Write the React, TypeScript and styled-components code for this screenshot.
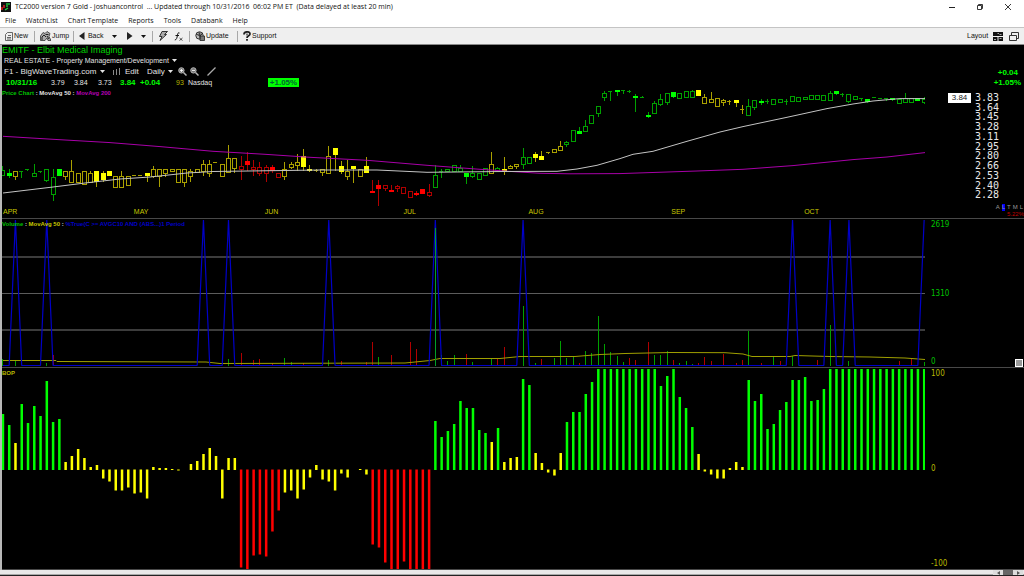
import React from 'react';
import styled, { createGlobalStyle } from 'styled-components';

const GREEN = '#00ff00';
const YELLOW = '#ffff00';
const RED = '#ff0000';

const GlobalStyle = createGlobalStyle`
  *, *::before, *::after { box-sizing: border-box; }
  body { margin: 0; background: #000; font-family: "Liberation Sans", Arial, sans-serif; }
  button, select {
    margin: 0; padding: 0; border: 0; background: none; color: inherit;
    font: inherit; line-height: inherit; appearance: none; cursor: pointer;
  }
  svg { display: block; flex: none; }
`;

/* ---------- data ---------- */

const FIRST_X = 2.9;
const STEP = 6.267;
const barX = (i: number) => FIRST_X + i * STEP;

type Tone = 'g' | 'y' | 'r';

// first bar index of each run of one colour, shared by the candles and the BOP bars
const toneRuns: [number, Tone][] = [
  [0, 'g'], [2, 'y'], [3, 'g'], [10, 'y'], [38, 'r'], [45, 'y'], [59, 'r'], [69, 'g'], [78, 'y'],
  [79, 'g'], [80, 'y'], [83, 'g'], [85, 'y'], [90, 'g'], [111, 'y'], [119, 'g'],
];

const toneAt = (i: number): Tone => {
  let tone: Tone = 'g';
  toneRuns.forEach(([from, t]) => {
    if (i >= from) tone = t;
  });
  return tone;
};

// high, body top, body bottom, low; an asterisk marks a solid body
const candles = `166,170,175,176 169,173,176,178* 171,171,176,180 171,171,172,178 169,169,170,171
164,173,176,176 171,171,172,173 169,169,180,182 169,177,194,201 169,169,176,176* 171,171,176,180
160,171,182,182 173,173,182,182 171,171,184,184 171,173,182,182 171,171,182,187* 171,173,180,182*
171,171,176,176* 176,176,187,187 171,176,187,187 176,176,185,185 175,175,176,176 175,175,176,176
173,173,176,182* 166,169,176,178 169,169,176,187 169,169,173,177 169,169,171,172 169,169,182,182
169,169,182,187 169,171,176,182 169,169,172,172 160,164,171,176 160,164,173,177 162,162,163,163
164,164,176,177 145,158,172,172 158,158,168,173 156,166,169,180 152,161,165,171* 160,167,169,176
162,167,173,176 165,167,173,182 165,167,171,173* 173,173,177,177 162,169,176,180 162,164,167,169
154,162,165,171 149,156,167,171* 165,169,171,172* 169,170,171,172 169,169,172,176 146,156,173,173
148,148,155,171* 161,166,172,174* 160,171,176,180 166,166,169,183* 169,169,176,176 157,166,173,173*
180,191,193,193* 180,185,189,207* 185,185,188,191 185,190,192,192* 185,186,188,192 187,187,193,193
191,191,197,197 191,193,195,196* 189,189,194,194* 184,192,195,197 165,175,187,187 169,171,172,178
169,169,171,171 165,165,171,171 165,168,171,172 173,173,177,184* 166,173,176,178 173,173,179,179
168,168,175,175 152,164,173,173 167,168,171,172 157,169,171,175* 165,166,168,168 164,164,166,169
148,157,164,169 157,157,163,163 152,154,158,162* 151,156,160,160* 152,152,153,154 149,149,152,152
141,146,150,150 141,142,144,147 130,130,141,141 127,131,134,134* 120,126,131,131 115,115,123,123
106,106,113,117 91,93,97,101 91,91,92,101 90,90,92,96* 90,90,91,94 90,91,92,93 94,96,98,112*
96,97,98,98 112,115,117,118* 101,103,113,114 94,99,104,106 93,93,102,105 92,92,97,98* 93,93,98,98
91,91,97,97 90,91,97,97 90,90,96,96* 94,97,103,103 92,99,102,103 98,98,106,106 99,100,102,106
100,101,102,105 100,100,103,107* 105,109,110,114 99,106,115,115 100,100,107,110 99,101,103,105*
99,101,102,104 99,99,104,104 99,99,102,103 99,101,102,105 96,96,101,101 97,97,101,101 97,97,99,99
95,95,99,99 95,95,99,99 95,95,100,100 91,93,100,100 91,91,94,95* 93,94,95,97 94,94,101,103
96,96,99,100 98,98,99,101 99,99,102,103* 97,97,98,98 98,98,99,99 98,98,99,101 98,98,100,101*
99,99,103,103 93,98,102,102 98,98,102,102 98,98,101,101* 97,99,102,104`
  .split(/\s+/)
  .map((item) => ({
    solid: item.endsWith('*'),
    v: item.replace('*', '').split(',').map(Number),
  }));

const bop = [
  56, 45, 27, 66, 47, 64, 54, 89, 48, 51, 8, 14, 21, 12, 3, 5, -9, -12, -21, -21, -18, -24, -23, -29,
  3, 2, 2, 1, -1, 0, 6, 9, 16, 22, 14, -29, 12, 12, -98, -100, -86, -85, -87, -62, -41, -23, -21, -29,
  -20, -8, 5, -10, -12, -21, -4, -8, 0, 1, -5, -75, -78, -93, -100, -100, -92, -100, -100, -100, -100,
  49, 33, 39, 46, 69, 62, 62, 40, 37, 28, 42, 8, 12, 13, 91, 85, 17, 7, -3, -6, 17, 48, 58, 58, 76, 88,
  101, 101, 101, 101, 101, 101, 101, 101, 101, 101, 84, 94, 101, 73, 62, 43, 16, -2, -5, -9, -9, 2, 8,
  3, 90, 69, 76, 41, 46, 60, 68, 90, 90, 93, 69, 70, 81, 101, 101, 101, 101, 101, 101, 101, 101, 101,
  101, 101, 101, 101, 101, 101, 101,
];

// bar index, top, tone
const volumes: [number, number, Tone][] = [
  [0, 359, 'g'], [2, 361, 'g'], [7, 363, 'g'], [8, 355, 'r'], [36, 359, 'g'], [38, 353, 'r'], [40, 360, 'r'],
  [41, 359, 'r'], [43, 363, 'r'], [45, 358, 'g'], [46, 362, 'g'], [48, 363, 'r'], [52, 360, 'g'],
  [54, 361, 'r'], [58, 362, 'r'], [59, 342, 'r'], [60, 357, 'g'], [62, 355, 'r'], [65, 342, 'r'],
  [66, 349, 'r'], [69, 228, 'g'], [70, 355, 'g'], [71, 361, 'g'], [72, 355, 'g'], [74, 354, 'r'],
  [75, 362, 'g'], [78, 359, 'g'], [79, 359, 'r'], [80, 347, 'r'], [83, 306, 'g'], [85, 363, 'g'],
  [86, 359, 'r'], [88, 358, 'g'], [89, 341, 'g'], [90, 358, 'g'], [91, 356, 'g'], [92, 363, 'r'],
  [93, 351, 'g'], [94, 353, 'g'], [95, 316, 'g'], [96, 344, 'g'], [97, 352, 'g'], [98, 356, 'g'],
  [99, 362, 'g'], [100, 358, 'r'], [101, 360, 'r'], [103, 342, 'r'], [104, 355, 'g'], [105, 355, 'g'],
  [106, 351, 'g'], [107, 360, 'r'], [108, 363, 'g'], [109, 361, 'g'], [110, 364, 'g'], [111, 363, 'r'],
  [112, 357, 'r'], [113, 361, 'r'], [115, 354, 'r'], [117, 363, 'r'], [118, 360, 'r'], [119, 331, 'g'],
  [121, 363, 'r'], [123, 356, 'g'], [124, 361, 'r'], [126, 356, 'g'], [130, 360, 'r'], [132, 325, 'g'],
  [135, 361, 'g'], [143, 361, 'r'], [145, 359, 'r'], [147, 362, 'g'],
];

const signals = [2, 7, 32, 36, 52, 69, 83, 126, 132, 135, 147];

const ma50 =
  '3,193 53,187 85,183 120,179 150,177 187,173 213,171.5 320,170 377,170 427,172.3 503,171.5 557,171.3 577,169 597,165.3 620,158.6 633,154.3 653,151.3 687,141.3 720,132 743,126.6 787,117.3 827,108.6 853,104 873,101 900,98.6 925,98.6';
const ma200 =
  '3,136.3 53,139.3 110,142.6 160,146.6 213,151.3 265,154.3 310,157.3 367,160.3 427,165.3 480,169.3 513,171.6 540,173.3 570,173.8 620,173.6 697,171 743,169.3 793,165.6 853,159.6 887,157 925,152.6';
const volumeMa =
  '3,360.5 56,360.5 57,361.5 206,362 220,363.5 405,363 420,361.5 430,360.5 440,358.5 500,358.5 520,356.5 575,356.5 600,354.5 625,353.5 670,352.5 725,352.7 743,354 752,356.5 790,356.5 795,355.5 830,356.5 870,357 905,358 925,359.5';

const priceTicks = ['3.83', '3.64', '3.45', '3.28', '3.11', '2.95', '2.80', '2.66', '2.53', '2.40', '2.28'];
const months = ['APR', 'MAY', 'JUN', 'JUL', 'AUG', 'SEP', 'OCT'];

/* ---------- window frame ---------- */

const AppWindow = styled.div`
  display: flex;
  flex-direction: column;
  min-height: 100vh;
  background: #fff;
  color: #111;
`;

const TitleBar = styled.header`
  display: flex;
  align-items: center;
  height: 14px;
  padding: 0 12px 0 1px;
  gap: 4px;
  font: 7px/14px "Open Sans", "Noto Sans", sans-serif;
`;

const Title = styled.h1`
  flex: 1;
  margin: 0;
  font: inherit;
  white-space: pre;
`;

const WindowButtons = styled.div`
  display: flex;
  gap: 20px;
`;

const MenuBar = styled.nav`
  display: flex;
  align-items: center;
  height: 13px;
  padding: 0 5px;
  gap: 10px;
  font: 7px/13px "Open Sans", "Noto Sans", sans-serif;
`;

const ToolBar = styled.div`
  display: flex;
  align-items: center;
  height: 18px;
  padding: 0 5px;
  background: #efefef;
  border-top: 1px solid #c4c4c4;
  border-bottom: 1px solid #8a8a8a;
  font-size: 7px;
  line-height: 14px;
`;

const ToolButton = styled.button<{ $width?: number }>`
  display: flex;
  align-items: center;
  gap: 1px;
  width: ${(p) => (p.$width ? `${p.$width}px` : 'auto')};
  white-space: nowrap;
`;

const Divider = styled.span`
  width: 1px;
  height: 11px;
  margin: 0 5px;
  background: #a8a8a8;
`;

const LayoutTools = styled.div`
  display: flex;
  align-items: center;
  gap: 6px;
  margin-left: auto;
`;

/* ---------- chart panes ---------- */

const Charts = styled.main`
  flex: 1;
  display: grid;
  grid-template-rows: minmax(174px, 174fr) minmax(149px, 149fr) minmax(202px, 202fr);
  border-left: 2px solid #b8b8b8;
  background: #000;
`;

const Pane = styled.section`
  display: grid;
  grid-template-columns: minmax(0, 1fr) 99px;
  min-height: 0;
  border-bottom: 1px solid #484848;
`;

const PlotArea = styled.div`
  display: grid;
  grid-template: minmax(0, 1fr) / minmax(0, 1fr);
  min-height: 0;
`;

const PlotSvg = styled.svg`
  grid-area: 1 / 1;
  width: 100%;
  height: 0;
  min-height: 100%;
`;

const PriceColumn = styled.div`
  display: grid;
  grid-template-rows: minmax(0, 1fr) 12px;
  min-height: 0;
`;

const MonthRow = styled.div`
  display: grid;
  grid-template-columns: 131fr 131fr 139fr 125fr 143fr 133fr 121fr;
  padding-left: 1px;
  color: #c8c800;
  font-size: 7px;
  line-height: 11px;
`;

const Overlay = styled.div`
  grid-area: 1 / 1;
  z-index: 1;
  justify-self: start;
  align-self: start;
  color: #e4e4e4;
  white-space: nowrap;
`;

const Symbol = styled.h2`
  margin: 0;
  color: #00d000;
  font-size: 9px;
  font-weight: 400;
  line-height: 10px;
`;

const Line = styled.div<{ $size: number }>`
  display: flex;
  align-items: center;
  gap: 3px;
  height: 11px;
  padding-left: 2px;
  font-size: ${(p) => p.$size}px;
  line-height: 11px;
`;

const ChartTools = styled.div`
  display: flex;
  gap: 3px;
  padding-left: 2px;
`;

const Quotes = styled.div`
  display: grid;
  grid-template-columns: 45px 23px 24px 22px 20px 36px 12px 80px auto;
  height: 11px;
  padding-left: 4px;
  font-size: 7px;
  line-height: 11px;
`;

const Up = styled.strong`
  color: ${GREEN};
  font-size: 8px;
`;

const Rank = styled.span`
  color: #b8b800;
`;

const Badge = styled.strong`
  align-self: center;
  width: 31px;
  height: 9px;
  background: ${GREEN};
  color: #063;
  font-size: 8px;
  line-height: 9px;
  text-align: center;
`;

const Legend = styled.div`
  height: 10px;
  font: bold 6px/10px "Liberation Sans", Arial, sans-serif;
`;

const Tint = styled.span<{ $color: string }>`
  color: ${(p) => p.$color};
`;

const PriceAxis = styled.div`
  display: grid;
  grid-template-columns: 23px 27px 1fr;
  grid-template-rows: 23px 10px 10px 5px minmax(0, 1fr);
  min-height: 0;
`;

const Change = styled.strong<{ $row: number; $inset: number }>`
  grid-column: 1 / -1;
  grid-row: ${(p) => p.$row};
  padding-right: ${(p) => p.$inset}px;
  color: ${GREEN};
  font-size: 8px;
  line-height: 10px;
  text-align: right;
`;

const LastPrice = styled.span`
  grid-column: 2;
  grid-row: 5;
  width: 23px;
  height: 10px;
  background: #fff;
  color: #222;
  font-size: 8px;
  line-height: 10px;
  text-align: center;
`;

const PriceTicks = styled.ol`
  grid-column: 3;
  grid-row: 5;
  display: grid;
  grid-template-rows: repeat(11, minmax(0, 98fr)) minmax(0, 180fr);
  min-height: 0;
  margin: 0;
  padding: 0;
  list-style: none;
  color: #e8e8e8;
  font: 10px/9px "DejaVu Sans Mono", monospace;
`;

const ScaleOptions = styled.li`
  display: flex;
  flex-direction: column;
  align-items: flex-end;
  justify-content: flex-end;
  color: #999;
  font: 6px/7px "Liberation Sans", Arial, sans-serif;
`;

const ScaleModes = styled.span`
  display: flex;
  gap: 2px;
  padding-right: 1px;
`;

const ScaleMode = styled.button<{ $on?: boolean }>`
  background: ${(p) => (p.$on ? '#0000ff' : 'none')};
`;

const ValueAxis = styled.div<{ $color: string }>`
  display: flex;
  flex-direction: column;
  justify-content: space-between;
  position: relative;
  padding: 2px 0 1px 6px;
  color: ${(p) => p.$color};
  font: 8px/8px "DejaVu Sans Condensed", "DejaVu Sans", sans-serif;
`;

const PaneToggle = styled.button`
  position: absolute;
  right: 1px;
  bottom: 0;
  width: 8px;
  height: 8px;
  border: 1px solid #fff;
  background: #999;
`;

const ScrollBar = styled.footer`
  display: flex;
  justify-content: flex-end;
  height: 6px;
  padding-right: 1px;
  background: #e8e8e8;
  border-bottom: 1px solid #222;
  box-shadow: inset 0 -1px #a8a8a8;
`;

const ScrollArrow = styled.button`
  display: flex;
  align-items: center;
  justify-content: center;
  width: 10px;
  color: #555;
  background: #ddd;
`;

const ScrollThumb = styled.button`
  width: 10px;
  background: #666;
`;

/* ---------- small drawings ---------- */

const Caret = () => (
  <svg width="5" height="3" viewBox="0 0 5 3">
    <path d="M0 0h5L2.5 3z" fill="currentColor" />
  </svg>
);

const Magnifier = ({ sign }: { sign: string }) => (
  <svg width="9" height="9" viewBox="0 0 9 9" fill="none" stroke="#b4b4b4">
    <circle cx="3.4" cy="3.4" r="2.7" fill="#777" />
    <path d="M5.5 5.5L8.5 8.5" strokeWidth="1.5" />
    <path d={sign} stroke="#fff" strokeWidth="0.9" />
  </svg>
);

const Arrow = ({ d }: { d: string }) => (
  <svg width="6" height="8" viewBox="0 0 6 8">
    <path d={d} fill="#222" />
  </svg>
);

const dim: Record<Tone, string> = { g: '#00a000', y: '#aaa000', r: '#b00000' };
const bright: Record<Tone, string> = { g: GREEN, y: YELLOW, r: RED };

const PricePlot = () => (
  <PlotSvg viewBox="2 45 923 161" preserveAspectRatio="none" role="img" aria-label="Daily price candles">
    <g shapeRendering="crispEdges">
      {candles.map(({ v: [high, top, bottom, low], solid }, i) => {
        const tone = toneAt(i);
        const x = Math.round(barX(i) - 0.5);
        const height = bottom - top;
        return (
          <g key={i} fill={solid ? bright[tone] : dim[tone]}>
            {high < top && <rect x={x} y={high} width="1" height={top - high} fill={dim[tone]} />}
            {low > bottom && <rect x={x} y={bottom} width="1" height={low - bottom} fill={dim[tone]} />}
            {solid || height < 2 ? (
              <rect x={x - 2} y={top} width={solid ? 5 : 4} height={height} />
            ) : (
              <rect x={x - 1.5} y={top + 0.5} width="4" height={height} fill="none" stroke={dim[tone]} />
            )}
          </g>
        );
      })}
    </g>
    <polyline points={ma200} fill="none" stroke="#a800a8" />
    <polyline points={ma50} fill="none" stroke="#c4c4c4" />
  </PlotSvg>
);

const signalPoints = Array.from({ length: 148 }, (_, i) => `${barX(i)},${signals.includes(i) ? 220 : 365.5}`).join(' ');

const VolumePlot = () => (
  <PlotSvg viewBox="2 219 923 148" preserveAspectRatio="none" role="img" aria-label="Volume">
    <g shapeRendering="crispEdges">
      <path d="M2 257H925M2 330H925" stroke="#3c3c3c" strokeWidth="2" />
      <path d="M2 293.5H925" stroke="#5c5c5c" />
      {volumes.map(([i, top, tone]) => (
        <rect key={i} x={Math.round(barX(i) - 0.5)} y={top} width="1" height={366 - top} fill={dim[tone]} />
      ))}
    </g>
    <polyline points={volumeMa} fill="none" stroke="#a0a000" />
    <polyline points={signalPoints} fill="none" stroke="#0000c8" strokeWidth="1.2" strokeLinejoin="bevel" />
    <rect x="435" y="228" width="1" height="138" fill="#00a028" />
  </PlotSvg>
);

const BopPlot = () => (
  <PlotSvg viewBox="2 368 923 201" preserveAspectRatio="none" role="img" aria-label="Balance of power">
    {bop.map((value, i) => (
      <rect
        key={i}
        x={barX(i) - 1.2}
        y={value > 0 ? 470 - value : 469.5}
        width="2.5"
        height={Math.abs(value)}
        fill={bright[toneAt(i)]}
      />
    ))}
  </PlotSvg>
);

/* ---------- page ---------- */

export default function App() {
  return (
    <AppWindow>
      <GlobalStyle />
      <TitleBar>
        <svg width="10" height="10" viewBox="0 0 10 10">
          <path d="M0 0h10v10H0z" fill="#111" />
          <path d="M1 8V5M3 6V3" stroke="#f22" strokeWidth="1.3" />
          <path d="M6 5V1M8 3V1M4 8l3-2" stroke="#2d4" strokeWidth="1.3" />
        </svg>
        <Title>{'TC2000 version 7 Gold - joshuancontrol  ... Updated through 10/31/2016  06:02 PM ET  (Data delayed at least 20 min)'}</Title>
        <WindowButtons>
          <button aria-label="Minimize">
            <svg width="8" height="8" viewBox="0 0 8 8"><path d="M1 4.5h6" stroke="#222" /></svg>
          </button>
          <button aria-label="Restore">
            <svg width="8" height="8" viewBox="0 0 8 8" fill="none" stroke="#222">
              <path d="M1.5 2.5h4v4h-4zM2.5 2.5v-1h4v4h-1" strokeWidth=".9" />
            </svg>
          </button>
          <button aria-label="Close">
            <svg width="8" height="8" viewBox="0 0 8 8"><path d="M1 1l6 6M7 1L1 7" stroke="#222" strokeWidth=".9" /></svg>
          </button>
        </WindowButtons>
      </TitleBar>
      <MenuBar>
        {['File', 'WatchList', 'Chart Template', 'Reports', 'Tools', 'Databank', 'Help'].map((name) => (
          <button key={name}>{name}</button>
        ))}
      </MenuBar>
      <ToolBar role="toolbar" aria-label="Main">
        <ToolButton $width={24}>
          <svg width="8" height="9" viewBox="0 0 8 9" fill="none" stroke="#444">
            <path d="M2.5.5h5v8h-7v-6zM3 3.5h3M2 5.5h4M2 7h4" strokeWidth=".8" />
          </svg>
          New
        </ToolButton>
        <Divider />
        <ToolButton $width={28}>
          <svg width="11" height="10" viewBox="0 0 11 10">
            <path d="M.5 9.5V5L3 1.5l2 1L7 .5l3 2-1 3 2 4H8L7 7 5 9.5z" fill="#aaa" stroke="#333" strokeWidth=".8" />
            <path d="M2 9V6l2-2 2 2M5.5 3.5h3M7 5l2 3" fill="none" stroke="#222" />
          </svg>
          Jump
        </ToolButton>
        <Divider />
        <ToolButton $width={33}>
          <Arrow d="M5.5 0v8L0 4z" />
          &nbsp;Back
        </ToolButton>
        <ToolButton $width={15} aria-label="Back history"><Caret /></ToolButton>
        <ToolButton $width={14} aria-label="Forward"><Arrow d="M0 0v8l5.5-4z" /></ToolButton>
        <ToolButton $width={6} aria-label="Forward history"><Caret /></ToolButton>
        <Divider />
        <ToolButton $width={16} aria-label="Quick scan">
          <svg width="10" height="10" viewBox="0 0 10 10">
            <path d="M4 .5h5.5L6.5 3.5h2L2 9.5 4 5.5H1.5z" fill="#aaa" stroke="#222" strokeWidth=".9" />
          </svg>
        </ToolButton>
        <ToolButton $width={10} aria-label="Formula">
          <svg width="9" height="9" viewBox="0 0 9 9" fill="none" stroke="#111">
            <path d="M5.5 1C4 .3 3.7 1.5 3.4 3.5S2.5 8 .8 8M1.5 3.5h3.5" />
            <path d="M5.5 6l3 2.5M8.5 6l-3 2.5" strokeWidth=".7" />
          </svg>
        </ToolButton>
        <Divider />
        <ToolButton $width={37}>
          <svg width="10" height="10" viewBox="0 0 10 10">
            <circle cx="4.5" cy="4.5" r="3.7" fill="#bbb" stroke="#333" />
            <path d="M1 3l4 2 3-3M4 1l1 4v3M5 5h4.5v4.5H5z" fill="#777" stroke="#222" strokeWidth=".8" />
          </svg>
          Update
        </ToolButton>
        <Divider />
        <ToolButton>
          <svg width="8" height="10" viewBox="0 0 8 10" fill="none" stroke="#222" strokeWidth="1.8">
            <path d="M1 3.5C1 0 7 0 7 3c0 2-3 1.5-3 4M4 8v1.8" />
            <path d="M3 3.5h2" stroke="#777" />
          </svg>
          Support
        </ToolButton>
        <LayoutTools>
          <ToolButton>
            Layout&nbsp;&nbsp;
            <svg width="10" height="9" viewBox="0 0 10 9">
              <path d="M0 0h10v4H0zM0 5h4.5v4H0zM5.5 5H10v4H5.5z" fill="#111" />
              <path d="M4.5 1.5H6M6.5 2.5h2M1 7.5h2M6.5 6.5h2" stroke="#ccc" strokeWidth=".8" />
            </svg>
          </ToolButton>
          <ToolButton aria-label="Windows">
            <svg width="10" height="9" viewBox="0 0 10 9" fill="none" stroke="#333">
              <path d="M.5 3.5h7v5h-7zM2.5 3V.5h7v6H8" />
            </svg>
          </ToolButton>
        </LayoutTools>
      </ToolBar>

      <Charts>
        <Pane aria-label="Price">
          <PriceColumn>
            <PlotArea>
              <PricePlot />
              <Overlay>
                <Symbol>EMITF - Elbit Medical Imaging</Symbol>
                <Line $size={7}>
                  REAL ESTATE - Property Management/Development <Caret />
                </Line>
                <Line $size={8}>
                  <select aria-label="Chart template"><option>F1 - BigWaveTrading.com</option></select>
                  <Caret />
                  <svg width="14" height="8" viewBox="4 0 14 8" fill="none" stroke="#888">
                    <path d="M9.5 2v5M12.5 1v6M15.5 0v7" />
                  </svg>
                  <button>Edit</button>
                  &nbsp;
                  <select aria-label="Period"><option>Daily</option></select>
                  <Caret />
                  <ChartTools>
                    <button aria-label="Zoom in"><Magnifier sign="M2 3.4h3M3.4 2v3" /></button>
                    <button aria-label="Zoom out"><Magnifier sign="M2 3.4h3" /></button>
                  </ChartTools>
                  &nbsp;
                  <button aria-label="Draw line">
                    <svg width="9" height="9" viewBox="0 0 9 9"><path d="M.5 8.5L8.5.5" stroke="#aaa" strokeWidth="1.2" /></svg>
                  </button>
                </Line>
                <Quotes>
                  <Up>10/31/16</Up>
                  <span>3.79</span>
                  <span>3.84</span>
                  <span>3.73</span>
                  <Up>3.84</Up>
                  <Up>+0.04</Up>
                  <Rank>93</Rank>
                  <span>Nasdaq</span>
                  <Badge>+1.05%</Badge>
                </Quotes>
                <Legend>
                  <Tint $color="#00c000">Price Chart</Tint> : MovAvg 50 : <Tint $color="#b400b4">MovAvg 200</Tint>
                </Legend>
              </Overlay>
            </PlotArea>
            <MonthRow>
              {months.map((m) => <span key={m}>{m}</span>)}
            </MonthRow>
          </PriceColumn>
          <PriceAxis>
            <Change $row={2} $inset={6}>+0.04</Change>
            <Change $row={3} $inset={3}>+1.05%</Change>
            <LastPrice>3.84</LastPrice>
            <PriceTicks>
              {priceTicks.map((t) => <li key={t}>{t}</li>)}
              <ScaleOptions>
                <ScaleModes>
                  <ScaleMode>A</ScaleMode>
                  <ScaleMode $on>L</ScaleMode>
                  <ScaleMode>T</ScaleMode>
                  <ScaleMode>M</ScaleMode>
                  <ScaleMode>L</ScaleMode>
                </ScaleModes>
                <Tint $color="#c00000">5.22%</Tint>
              </ScaleOptions>
            </PriceTicks>
          </PriceAxis>
        </Pane>

        <Pane aria-label="Volume">
          <PlotArea>
            <VolumePlot />
            <Overlay>
              <Legend>
                <Tint $color="#00c000">Volume</Tint> : <Tint $color="#c8c800">MovAvg 50</Tint> :{' '}
                <Tint $color="#0000c8">%True(C &gt;= AVGC10 AND (ABS...)1 Period</Tint>
              </Legend>
            </Overlay>
          </PlotArea>
          <ValueAxis $color="#00c000">
            <span>2619</span>
            <span>1310</span>
            <span>0</span>
            <PaneToggle aria-label="Resize pane" />
          </ValueAxis>
        </Pane>

        <Pane aria-label="Balance of power">
          <PlotArea>
            <BopPlot />
            <Overlay>
              <Legend><Tint $color="#b8b800">BOP</Tint></Legend>
            </Overlay>
          </PlotArea>
          <ValueAxis $color="#b8b800">
            <span>100</span>
            <span>0</span>
            <span>-100</span>
          </ValueAxis>
        </Pane>
      </Charts>
      <ScrollBar>
        <ScrollArrow aria-label="Scroll left">
          <svg width="3" height="4" viewBox="0 0 3 4"><path d="M3 0v4L0 2z" fill="currentColor" /></svg>
        </ScrollArrow>
        <ScrollThumb aria-label="Scroll position" />
        <ScrollArrow aria-label="Scroll right">
          <svg width="3" height="4" viewBox="0 0 3 4"><path d="M0 0v4l3-2z" fill="currentColor" /></svg>
        </ScrollArrow>
      </ScrollBar>
    </AppWindow>
  );
}
